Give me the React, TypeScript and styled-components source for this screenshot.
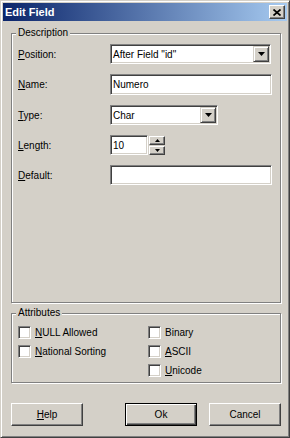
import React from "react";
import styled, { createGlobalStyle } from "styled-components";

const GlobalStyle = createGlobalStyle`
  html, body { margin: 0; padding: 0; background: #d4d0c8; }
  body { font-family: "Liberation Sans", Arial, sans-serif; font-size: 10px; color: #000; }
  * { box-sizing: border-box; }
`;

const Window = styled.div`
  width: 290px;
  height: 438px;
  background: #d4d0c8;
  border: 1px solid;
  border-color: #d4d0c8 #404040 #404040 #d4d0c8;
  box-shadow: inset 1px 1px 0 #fff, inset -1px -1px 0 #808080;
  padding: 2px;
  display: flex;
  flex-direction: column;
`;

const TitleBar = styled.div`
  height: 18px;
  display: flex;
  align-items: center;
  justify-content: space-between;
  padding: 0 2px 0 2px;
  background: linear-gradient(to right, #0a246a, #a6caf0);
`;

const Title = styled.span`
  color: #fff;
  font-weight: bold;
  font-size: 11px;
  line-height: 14px;
  padding-left: 0px;
`;

const CloseButton = styled.div`
  width: 16px;
  height: 14px;
  background: #d4d0c8;
  border: 1px solid;
  border-color: #fff #404040 #404040 #fff;
  box-shadow: inset -1px -1px 0 #808080;
  display: flex;
  align-items: center;
  justify-content: center;
`;

const Client = styled.div`
  flex: 1;
  display: flex;
  flex-direction: column;
  padding: 12px 6px 0 8px;
`;

const GroupBox = styled.div<{ $h: number; $mt?: number }>`
  position: relative;
  height: ${(p) => p.$h}px;
  margin-top: ${(p) => p.$mt ?? 0}px;
  border: 1px solid #808080;
  box-shadow: inset 1px 1px 0 #fff, 1px 1px 0 #fff;
`;

const Legend = styled.span`
  position: absolute;
  top: -7px;
  left: 4px;
  padding: 0 2px;
  background: #d4d0c8;
  line-height: 12px;
`;

const FormRows = styled.div`
  display: flex;
  flex-direction: column;
  gap: 10px;
  padding: 10px 0 0 6px;
`;

const FormRow = styled.div<{ $h: number }>`
  display: flex;
  align-items: center;
  height: ${(p) => p.$h}px;
`;

const Label = styled.span`
  width: 92px;
  flex: none;
`;

const Mn = styled.span`
  text-decoration: underline;
`;

const Field = styled.div<{ $w: number }>`
  width: ${(p) => p.$w}px;
  height: 100%;
  background: #fff;
  border: 1px solid;
  border-color: #808080 #fff #fff #808080;
  box-shadow: inset 1px 1px 0 #404040, inset -1px -1px 0 #d4d0c8;
  display: flex;
  align-items: center;
  padding: 1px;
`;

const FieldText = styled.span`
  flex: 1;
  padding-left: 1px;
  white-space: nowrap;
  overflow: hidden;
`;

const DropButton = styled.div`
  width: 16px;
  height: 100%;
  flex: none;
  background: #d4d0c8;
  border: 1px solid;
  border-color: #d4d0c8 #404040 #404040 #d4d0c8;
  box-shadow: inset 1px 1px 0 #fff, inset -1px -1px 0 #808080;
  display: flex;
  align-items: center;
  justify-content: center;
`;

const Spinner = styled.div`
  display: flex;
  flex-direction: column;
  gap: 1px;
  margin-left: 1px;
  height: 19px;
`;

const SpinButton = styled.div`
  width: 16px;
  height: 9px;
  background: #d4d0c8;
  border: 1px solid;
  border-color: #fff #404040 #404040 #fff;
  box-shadow: inset -1px -1px 0 #808080;
  display: flex;
  align-items: center;
  justify-content: center;
`;

const CheckColumns = styled.div`
  display: flex;
  padding: 12px 0 0 6px;
`;

const CheckColumn = styled.div`
  width: 130px;
  display: flex;
  flex-direction: column;
  gap: 6px;
`;

const CheckRow = styled.div`
  display: flex;
  align-items: center;
  gap: 4px;
  height: 13px;
`;

const CheckBox = styled.div`
  width: 13px;
  height: 13px;
  flex: none;
  background: #fff;
  border: 1px solid;
  border-color: #808080 #fff #fff #808080;
  box-shadow: inset 1px 1px 0 #404040, inset -1px -1px 0 #d4d0c8;
`;

const ButtonBar = styled.div`
  display: flex;
  align-items: center;
  margin-top: 20px;
  gap: 12px;
`;

const Spacer = styled.div`
  flex: 1;
`;

const Button = styled.div<{ $default?: boolean }>`
  width: 72px;
  height: 23px;
  display: flex;
  align-items: center;
  justify-content: center;
  background: #d4d0c8;
  border: 1px solid;
  border-color: ${(p) => (p.$default ? "#000" : "#fff #404040 #404040 #fff")};
  box-shadow: ${(p) =>
    p.$default
      ? "inset 1px 1px 0 #fff, inset -1px -1px 0 #404040, inset -2px -2px 0 #808080"
      : "inset -1px -1px 0 #808080"};
`;

const DownArrow = () => (
  <svg width="7" height="4" viewBox="0 0 7 4">
    <path d="M0 0h7L3.5 4z" fill="#000" />
  </svg>
);

const SmallArrow = ({ up }: { up?: boolean }) => (
  <svg width="5" height="3" viewBox="0 0 5 3">
    <path d={up ? "M2.5 0L5 3H0z" : "M0 0h5L2.5 3z"} fill="#000" />
  </svg>
);

const CloseGlyph = () => (
  <svg width="8" height="7" viewBox="0 0 8 7">
    <path d="M0.5 0.5L7.5 6.5M7.5 0.5L0.5 6.5" stroke="#000" strokeWidth="1.7" />
  </svg>
);

export default function App() {
  return (
    <>
      <GlobalStyle />
      <Window>
        <TitleBar>
          <Title>Edit Field</Title>
          <CloseButton>
            <CloseGlyph />
          </CloseButton>
        </TitleBar>
        <Client>
          <GroupBox $h={270}>
            <Legend>Description</Legend>
            <FormRows>
              <FormRow $h={20}>
                <Label>
                  <Mn>P</Mn>osition:
                </Label>
                <Field $w={161}>
                  <FieldText>After Field "id"</FieldText>
                  <DropButton>
                    <DownArrow />
                  </DropButton>
                </Field>
              </FormRow>
              <FormRow $h={21}>
                <Label>
                  <Mn>N</Mn>ame:
                </Label>
                <Field $w={162}>
                  <FieldText>Numero</FieldText>
                </Field>
              </FormRow>
              <FormRow $h={20}>
                <Label>
                  <Mn>T</Mn>ype:
                </Label>
                <Field $w={108}>
                  <FieldText>Char</FieldText>
                  <DropButton>
                    <DownArrow />
                  </DropButton>
                </Field>
              </FormRow>
              <FormRow $h={20}>
                <Label>
                  <Mn>L</Mn>ength:
                </Label>
                <Field $w={38}>
                  <FieldText>10</FieldText>
                </Field>
                <Spinner>
                  <SpinButton>
                    <SmallArrow up />
                  </SpinButton>
                  <SpinButton>
                    <SmallArrow />
                  </SpinButton>
                </Spinner>
              </FormRow>
              <FormRow $h={20}>
                <Label>
                  <Mn>D</Mn>efault:
                </Label>
                <Field $w={162}>
                  <FieldText></FieldText>
                </Field>
              </FormRow>
            </FormRows>
          </GroupBox>
          <GroupBox $h={70} $mt={10}>
            <Legend>Attributes</Legend>
            <CheckColumns>
              <CheckColumn>
                <CheckRow>
                  <CheckBox />
                  <span>
                    <Mn>N</Mn>ULL Allowed
                  </span>
                </CheckRow>
                <CheckRow>
                  <CheckBox />
                  <span>
                    <Mn>N</Mn>ational Sorting
                  </span>
                </CheckRow>
              </CheckColumn>
              <CheckColumn>
                <CheckRow>
                  <CheckBox />
                  <span>Binary</span>
                </CheckRow>
                <CheckRow>
                  <CheckBox />
                  <span>
                    <Mn>A</Mn>SCII
                  </span>
                </CheckRow>
                <CheckRow>
                  <CheckBox />
                  <span>
                    <Mn>U</Mn>nicode
                  </span>
                </CheckRow>
              </CheckColumn>
            </CheckColumns>
          </GroupBox>
          <ButtonBar>
            <Button>
              <span>
                <Mn>H</Mn>elp
              </span>
            </Button>
            <Spacer />
            <Button $default>Ok</Button>
            <Button>Cancel</Button>
          </ButtonBar>
        </Client>
      </Window>
    </>
  );
}
